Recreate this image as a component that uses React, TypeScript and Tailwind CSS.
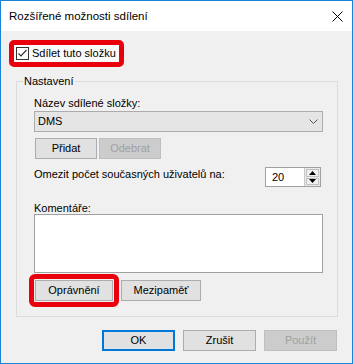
import React from "react";

const font = "font-['Liberation_Sans',Arial,sans-serif]";

function WinButton({
  label,
  disabled,
  primary,
  className = "",
}: {
  label: string;
  disabled?: boolean;
  primary?: boolean;
  className?: string;
}) {
  const look = disabled
    ? "bg-[#cccccc] border-[#bfbfbf] text-[#a0a0a0]"
    : primary
      ? "bg-[#e1e1e1] border-2 border-[#0078d7] text-black"
      : "bg-[#e1e1e1] border-[#adadad] text-black";
  return (
    <div className={`h-[21px] border flex items-center justify-center ${look} ${className}`}>
      {label}
    </div>
  );
}

export default function App() {
  return (
    <div
      className={`${font} w-[353px] h-[364px] border border-[#1883d7] bg-[#f0f0f0] flex flex-col text-[11px] leading-[15px] text-black`}
    >
      {/* Title bar */}
      <div className="h-[30px] bg-white flex items-center justify-between pl-[8px] pr-[9px] shrink-0">
        <span className="text-[11.5px]">Rozšířené možnosti sdílení</span>
        <svg width="11" height="11" viewBox="0 0 11 11">
          <path d="M0.5 0.5 L10.5 10.5 M10.5 0.5 L0.5 10.5" stroke="#000" strokeWidth="1" />
        </svg>
      </div>

      <div className="flex flex-col pl-[8px] pr-[14px] pt-[9px]">
        {/* Share checkbox, highlighted */}
        <div className="self-start h-[27px] border-[5px] border-[#e8000d] rounded-[5px] bg-[#fafafa] flex items-center pl-[2px] pr-[3px] gap-[3px]">
          <svg width="13" height="13" viewBox="0 0 13 13" className="shrink-0">
            <rect x="0.5" y="0.5" width="12" height="12" fill="#fff" stroke="#333" />
            <path d="M2.5 6.5 L5 9 L10.5 3" fill="none" stroke="#333" strokeWidth="1.2" />
          </svg>
          <span className="whitespace-nowrap">Sdílet tuto složku</span>
        </div>

        {/* Settings group */}
        <fieldset className="mt-[7px] ml-[7px] border border-[#dcdcdc] p-0">
          <legend className="ml-[6px] px-[1px]">Nastavení</legend>
          <div className="flex flex-col pl-[17px] pr-[14px] pb-[9px]">
            <div className="mt-[7px]">Název sdílené složky:</div>
            <div className="h-[21px] bg-[#e5e5e5] border border-[#acacac] flex items-center justify-between pl-[3px] pr-[4px]">
              <span>DMS</span>
              <svg width="9" height="5" viewBox="0 0 9 5">
                <path d="M0.5 0.5 L4.5 4.5 L8.5 0.5" fill="none" stroke="#555" strokeWidth="1" />
              </svg>
            </div>
            <div className="mt-[6px] flex gap-[2px]">
              <WinButton label="Přidat" className="w-[62px] ml-[1px]" />
              <WinButton label="Odebrat" disabled className="w-[62px]" />
            </div>

            <div className="mt-[8px] flex items-start justify-between">
              <span>Omezit počet současných uživatelů na:</span>
              <div className="mr-[2px] w-[56px] h-[20px] border border-[#a0a0a0] bg-white flex">
                <span className="flex-1 pl-[6px] leading-[18px]">20</span>
                <div className="w-[16px] flex flex-col bg-[#e9e9e9] border-l border-[#c8c8c8] p-[1px] gap-[1px]">
                  <div className="flex-1 flex items-center justify-center border border-[#c0c0c0] bg-[#f0f0f0]">
                    <svg width="7" height="4" viewBox="0 0 7 4">
                      <path d="M0 4 L3.5 0 L7 4 Z" fill="#000" />
                    </svg>
                  </div>
                  <div className="flex-1 flex items-center justify-center border border-[#c0c0c0] bg-[#f0f0f0]">
                    <svg width="7" height="4" viewBox="0 0 7 4">
                      <path d="M0 0 L3.5 4 L7 0 Z" fill="#000" />
                    </svg>
                  </div>
                </div>
              </div>
            </div>

            <div className="mt-[15px] leading-[12px]">Komentáře:</div>
            <div className="h-[59px] bg-white border border-[#a0a0a0]" />

            <div className="mt-[1px] flex items-center gap-[2px]">
              <div className="-ml-[5px] border-[5px] border-[#e8000d] rounded-[6px] p-[1px]">
                <WinButton label="Oprávnění" className="w-[78px] h-[20px]" />
              </div>
              <WinButton label="Mezipaměť" className="w-[80px] h-[20px]" />
            </div>
          </div>
        </fieldset>

        {/* Dialog buttons */}
        <div className="mt-[13px] flex justify-end gap-[8px] pr-[1px]">
          <WinButton label="OK" primary className="w-[73px]" />
          <WinButton label="Zrušit" className="w-[73px]" />
          <WinButton label="Použít" disabled className="w-[73px]" />
        </div>
      </div>
    </div>
  );
}
